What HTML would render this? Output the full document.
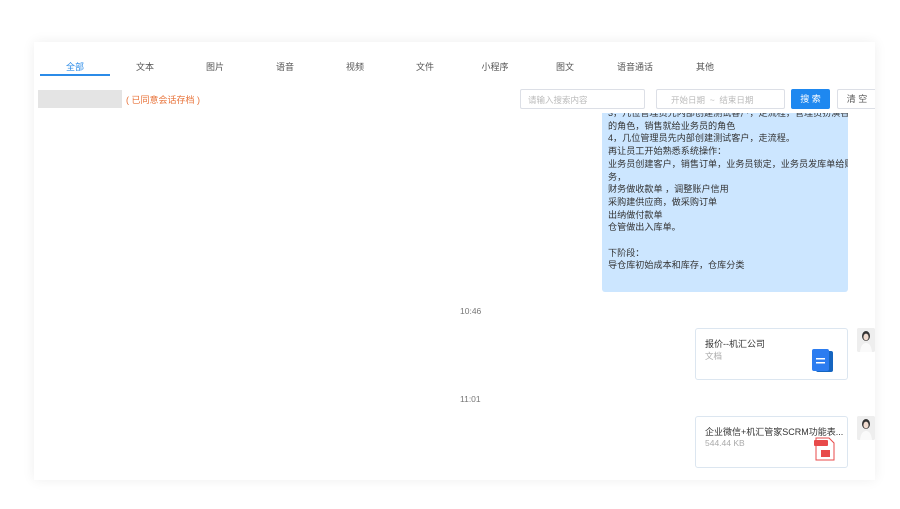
<!DOCTYPE html>
<html><head><meta charset="utf-8"><style>
*{margin:0;padding:0;box-sizing:border-box}
body{width:900px;height:509px;background:#fff;font-family:"Liberation Sans","Noto Sans CJK SC",sans-serif;position:relative;overflow:hidden;color:#333}
.panel{position:absolute;left:34px;top:42px;width:841px;height:438px;background:#fff;box-shadow:0 0 12px rgba(0,0,0,.07);overflow:hidden}
.a{position:absolute}
.hdr{position:absolute;left:0;top:0;width:841px;height:71px;background:#fff;z-index:2}
.tab{position:absolute;top:18px;font-size:9px;color:#555;transform:translateX(-50%);white-space:nowrap}
.bubble{position:absolute;left:568px;top:64px;width:246px;height:186px;background:#cce6ff;border-radius:3px;font-size:9.1px;line-height:12.7px;color:#333;padding:0 6px;white-space:nowrap;overflow:hidden}
.card{position:absolute;left:661px;width:153px;height:52px;border:1px solid #dce6f0;border-radius:3px;background:#fff}
.card .t{position:absolute;left:9px;top:8px;font-size:9px;color:#333;white-space:nowrap}
.card .s{position:absolute;left:9px;top:21px;font-size:8.5px;color:#aaa}
.av{position:absolute;left:823px;width:18px;height:24px;background:#eee;border-radius:2px;overflow:hidden}
.time{position:absolute;left:426px;width:0;font-size:8.5px;color:#777;white-space:nowrap;text-align:center}
</style></head><body>
<div class="panel">
<div class="hdr">
<div class="tab" style="left:41px;color:#2b8be8">全部</div>
<div class="a" style="left:6px;top:32px;width:70px;height:2px;background:#2b8be8"></div>
<div class="tab" style="left:111px">文本</div>
<div class="tab" style="left:181px">图片</div>
<div class="tab" style="left:251px">语音</div>
<div class="tab" style="left:321px">视频</div>
<div class="tab" style="left:391px">文件</div>
<div class="tab" style="left:461px">小程序</div>
<div class="tab" style="left:531px">图文</div>
<div class="tab" style="left:601px">语音通话</div>
<div class="tab" style="left:671px">其他</div>
<div class="a" style="left:4px;top:48px;width:84px;height:18px;background:#e4e4e4"></div>
<div class="a" style="left:92px;top:51px;font-size:9px;color:#e8733a">( 已同意会话存档 )</div>
<div class="a" style="left:486px;top:47px;width:125px;height:20px;border:1px solid #dcdfe6;border-radius:2px;font-size:8.5px;color:#bbb;padding:4px 7px">请输入搜索内容</div>
<div class="a" style="left:622px;top:47px;width:129px;height:20px;border:1px solid #dcdfe6;border-radius:2px;font-size:8.5px;color:#bbb;padding:4px 0 0 14px;white-space:nowrap">开始日期 &nbsp;~ &nbsp;结束日期</div>
<div class="a" style="left:757px;top:47px;width:39px;height:20px;background:#1e88f0;border-radius:2px;font-size:9px;color:#fff;text-align:center;line-height:20px">搜 索</div>
<div class="a" style="left:803px;top:47px;width:40px;height:20px;border:1px solid #dcdfe6;border-radius:2px;font-size:9px;color:#555;text-align:center;line-height:18px">清 空</div>
</div>
<div class="bubble">
<div style="margin-top:1px">3，几位管理员先内部创建测试客户，走流程，管理员扮演各岗位</div>
<div>的角色，销售就给业务员的角色</div>
<div>4，几位管理员先内部创建测试客户，走流程。</div>
<div>再让员工开始熟悉系统操作：</div>
<div>业务员创建客户，销售订单，业务员锁定，业务员发库单给财</div>
<div>务，</div>
<div>财务做收款单 ，调整账户信用</div>
<div>采购建供应商，做采购订单</div>
<div>出纳做付款单</div>
<div>仓管做出入库单。</div>
<div>&nbsp;</div>
<div>下阶段：</div>
<div>导仓库初始成本和库存，仓库分类</div>
</div>
<div class="time" style="top:264px">10:46</div>
<div class="card" style="top:286px"><div class="t">报价--机汇公司</div><div class="s">文档</div>
<svg class="a" style="left:116px;top:20px" width="22" height="24"><rect x="4" y="2" width="17" height="21" rx="2" fill="#1565c0"/><rect x="0" y="0" width="17" height="22" rx="2" fill="#2b7cf0"/><rect x="4" y="9" width="9" height="1.5" fill="#fff"/><rect x="4" y="13" width="9" height="1.5" fill="#fff"/></svg></div>
<div class="av" style="top:286px"><svg width="18" height="24"><rect width="18" height="24" fill="#eeeeee"/><ellipse cx="9" cy="8" rx="4" ry="5" fill="#333"/><ellipse cx="9" cy="9" rx="2.6" ry="3.4" fill="#f1dcd0"/><path d="M3 24q1-9 6-9t6 9z" fill="#fafafa"/></svg></div>
<div class="time" style="top:352px">11:01</div>
<div class="card" style="top:374px"><div class="t">企业微信+机汇管家SCRM功能表...</div><div class="s">544.44 KB</div>
<svg class="a" style="left:118px;top:20px" width="22" height="24"><path d="M2 1h13l5 5v17H2z" fill="#fff" stroke="#e84a4a" stroke-width="1"/><rect x="0" y="3" width="14" height="6" rx="1" fill="#e84a4a"/><rect x="7" y="13" width="9" height="7" fill="#e84a4a"/></svg></div>
<div class="av" style="top:374px"><svg width="18" height="24"><rect width="18" height="24" fill="#eeeeee"/><ellipse cx="9" cy="8" rx="4" ry="5" fill="#333"/><ellipse cx="9" cy="9" rx="2.6" ry="3.4" fill="#f1dcd0"/><path d="M3 24q1-9 6-9t6 9z" fill="#fafafa"/></svg></div>
</div>
</body></html>
